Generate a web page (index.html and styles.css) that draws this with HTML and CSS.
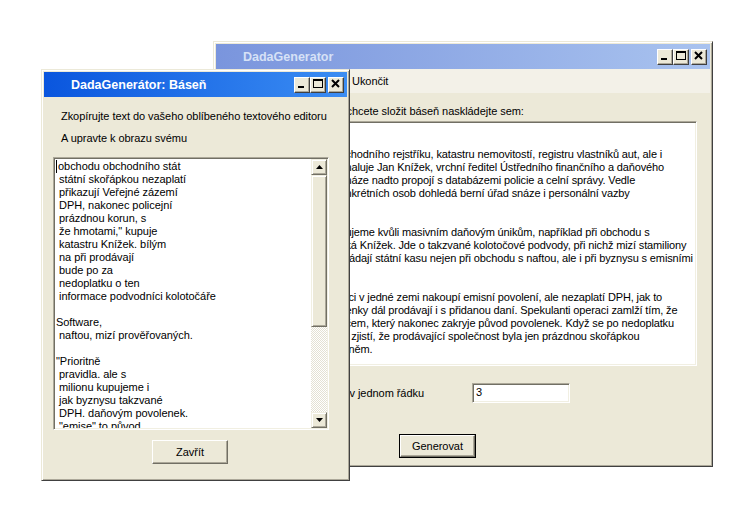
FILE: index.html
```html
<!DOCTYPE html>
<html lang="cs">
<head>
    <meta charset="UTF-8">
    <meta name="viewport" content="width=device-width, initial-scale=1.0">
    <title>DadaGenerator</title>

    <link rel="stylesheet" href="styles.css">
</head>
<body>
<div class="desktop">

    <!-- hlavni okno (neaktivni, v pozadi) -->
    <div class="window main-window">
        <div class="titlebar inactive">
            <span class="title">DadaGenerator</span>
            <div class="title-buttons">
                <span class="tbtn"><svg width="16" height="16" viewBox="0 0 16 16"><rect x="4" y="10" width="6" height="2" fill="#000"/></svg></span>
                <span class="tbtn"><svg width="16" height="16" viewBox="0 0 16 16"><rect x="3.5" y="3.5" width="9" height="8" fill="none" stroke="#000"/><rect x="3" y="3" width="10" height="2" fill="#000"/></svg></span>
                <span class="tbtn close"><svg width="16" height="16" viewBox="0 0 16 16"><path d="M4 4 L11 11 M11 4 L4 11" stroke="#000" stroke-width="2"/></svg></span>
            </div>
        </div>
        <div class="menubar">
            <span class="menu-item">Ukončit</span>
        </div>
        <div class="main-body">
            <div class="main-label">chcete složit báseň naskládejte sem:</div>
            <div class="textbox source-box">
                <div class="source-text">

chodního rejstříku, katastru nemovitostí, registru vlastníků aut, ale i
haluje Jan Knížek, vrchní ředitel Ústředního finančního a daňového
náze nadto propojí s databázemi policie a celní správy. Vedle
nkrétních osob dohledá berní úřad snáze i personální vazby


ujeme kvůli masivním daňovým únikům, například při obchodu s
ká Knížek. Jde o takzvané kolotočové podvody, při nichž mizí stamiliony
rádají státní kasu nejen při obchodu s naftou, ale i při byznysu s emisními


íci v jedné zemi nakoupí emisní povolení, ale nezaplatí DPH, jak to
enky dál prodávají i s přidanou daní. Spekulanti operaci zamlží tím, že
čem, který nakonec zakryje původ povolenek. Když se po nedoplatku
í zjistí, že prodávající společnost byla jen prázdnou skořápkou
 něm.</div>
            </div>
            <div class="field-row">
                <span class="field-label"> v jednom řádku</span>
                <div class="field-input">3</div>
            </div>
            <div class="generate-row">
                <span class="btn btn-default">Generovat</span>
            </div>
        </div>
    </div>

    <!-- okno s basni (aktivni) -->
    <div class="window poem-window">
        <div class="titlebar active">
            <span class="title">DadaGenerátor: Báseň</span>
            <div class="title-buttons">
                <span class="tbtn"><svg width="16" height="16" viewBox="0 0 16 16"><rect x="4" y="10" width="6" height="2" fill="#000"/></svg></span>
                <span class="tbtn"><svg width="16" height="16" viewBox="0 0 16 16"><rect x="3.5" y="3.5" width="9" height="8" fill="none" stroke="#000"/><rect x="3" y="3" width="10" height="2" fill="#000"/></svg></span>
                <span class="tbtn close"><svg width="16" height="16" viewBox="0 0 16 16"><path d="M4 4 L11 11 M11 4 L4 11" stroke="#000" stroke-width="2"/></svg></span>
            </div>
        </div>
        <div class="poem-body">
            <div class="poem-label">Zkopírujte text do vašeho oblíbeného textového editoru</div>
            <div class="poem-label second">A upravte k obrazu svému</div>
            <div class="textbox poem-box">
                <div class="poem-text"><span class="caret"></span>obchodu obchodního stát
 státní skořápkou nezaplatí
 přikazují Veřejné zázemí
 DPH, nakonec policejní
 prázdnou korun, s
 že hmotami," kupuje
 katastru Knížek. bílým
 na při prodávají
 bude po za
 nedoplatku o ten
 informace podvodníci kolotočáře

Software,
 naftou, mizí prověřovaných.

"Prioritně
 pravidla. ale s
 milionu kupujeme i
 jak byznysu takzvané
 DPH. daňovým povolenek.
 "emise" to původ
 nakonec</div>
                <div class="scrollbar">
                    <span class="sb-btn"><svg width="7" height="4" viewBox="0 0 7 4"><path d="M3.5 0 L7 4 L0 4 Z" fill="#000"/></svg></span>
                    <span class="sb-thumb"></span>
                    <span class="sb-track"></span>
                    <span class="sb-btn"><svg width="7" height="4" viewBox="0 0 7 4"><path d="M0 0 L7 0 L3.5 4 Z" fill="#000"/></svg></span>
                </div>
            </div>
            <div class="poem-actions">
                <span class="btn close-btn">Zavřít</span>
            </div>
        </div>
    </div>

</div>
</body>
</html>
```

FILE: styles.css
```css
body{
    margin: 0;
    background: #fff;
    font-family: "Liberation Sans", Arial, sans-serif;
    font-size: 11px;
    letter-spacing: -0.05px;
    color: #000;
}

.desktop{
    position: relative;
    width: 753px;
    height: 520px;
    overflow: hidden;
}

/* okna */
.window{
    position: absolute;
    box-sizing: border-box;
    display: flex;
    flex-direction: column;
    padding: 2px;
    background: #ECE9D8;
    border: 1px solid;
    border-color: #ECE9D8 #404040 #404040 #ECE9D8;
    box-shadow: inset 1px 1px #fff, inset -1px -1px #ACA899;
}

.main-window{
    left: 213px;
    top: 41px;
    width: 500px;
    height: 426px;
}

.poem-window{
    left: 41px;
    top: 69px;
    width: 309px;
    height: 412px;
}

.titlebar{
    height: 25px;
    display: flex;
    align-items: center;
    padding: 0 3px 0 27px;
    flex-shrink: 0;
}

.titlebar.active{
    background: linear-gradient(to right, #0A56DE, #3B8DF3);
    color: #fff;
}

.titlebar.inactive{
    background: linear-gradient(to right, #7A95DD, #A9C3EF);
    color: #D6E1F6;
}

.title{
    flex: 1;
    font-weight: bold;
    font-size: 12.5px;
    letter-spacing: 0;
    white-space: nowrap;
}

.title-buttons{
    display: flex;
}

.tbtn{
    box-sizing: border-box;
    width: 16px;
    height: 16px;
    background: #ECE9D8;
    border: 1px solid;
    border-color: #fff #404040 #404040 #fff;
    box-shadow: inset -1px -1px #ACA899;
    display: flex;
    align-items: center;
    justify-content: center;
    overflow: hidden;
}

.tbtn svg{
    flex-shrink: 0;
    margin: -1px 0 0 -1px;
}

.tbtn.close{
    margin-left: 2px;
}

/* spolecne prvky */
.textbox{
    box-sizing: border-box;
    background: #fff;
    border: 1px solid;
    border-color: #ACA899 #fff #fff #ACA899;
    box-shadow: inset 1px 1px #716F64, inset -1px -1px #F1EFE2;
    padding: 1px;
}

.btn{
    box-sizing: border-box;
    display: inline-flex;
    align-items: center;
    justify-content: center;
    background: #ECE9D8;
    border: 1px solid;
    border-color: #fff #716F64 #716F64 #fff;
    box-shadow: inset -1px -1px #ACA899;
}

.btn-default{
    outline: 1px solid #000;
}

/* hlavni okno */
.menubar{
    height: 24px;
    line-height: 24px;
    padding-left: 136px;
    background: #F3F1E8;
    flex-shrink: 0;
}

.main-body{
    padding: 0 13px 0 10px;
}

.main-label{
    margin-top: 12px;
    line-height: 13px;
    padding-left: 120.5px;
    white-space: nowrap;
}

.source-box{
    margin-top: 3px;
    height: 245px;
    overflow: hidden;
}

.source-text{
    white-space: pre;
    line-height: 13px;
    letter-spacing: -0.13px;
    padding-left: 117.5px;
    margin-top: -1px;
}

.field-row{
    display: flex;
    align-items: center;
    margin-top: 17px;
}

.field-label{
    box-sizing: border-box;
    width: 246px;
    padding-left: 120.5px;
    white-space: pre;
}

.field-input{
    box-sizing: border-box;
    width: 98px;
    height: 20px;
    line-height: 16px;
    padding-left: 3px;
    background: #fff;
    border: 1px solid;
    border-color: #ACA899 #fff #fff #ACA899;
    box-shadow: inset 1px 1px #716F64, inset -1px -1px #F1EFE2;
}

.generate-row{
    margin-top: 32px;
    padding-left: 174px;
}

.generate-row .btn{
    width: 75px;
    height: 22px;
}

/* okno s basni */
.poem-body{
    padding: 13px 18px 0 9px;
}

.poem-label{
    line-height: 13px;
    padding-left: 8px;
    white-space: nowrap;
}

.poem-label.second{
    margin-top: 9px;
}

.poem-box{
    margin-top: 12px;
    height: 273px;
    display: flex;
}

.poem-text{
    flex: 1;
    white-space: pre;
    overflow: hidden;
    line-height: 13px;
    padding: 1px 0 0 1px;
}

.caret{
    display: inline-block;
    width: 1px;
    height: 13px;
    margin-right: 1px;
    background: #000;
    vertical-align: top;
}

.scrollbar{
    width: 16px;
    display: flex;
    flex-direction: column;
}

.sb-btn,
.sb-thumb{
    box-sizing: border-box;
    background: #ECE9D8;
    border: 1px solid;
    border-color: #F1EFE2 #716F64 #716F64 #F1EFE2;
    box-shadow: inset 1px 1px #fff, inset -1px -1px #ACA899;
}

.sb-btn{
    height: 16px;
    display: flex;
    align-items: center;
    justify-content: center;
}

.sb-thumb{
    height: 152px;
}

.sb-track{
    flex: 1;
    background: repeating-conic-gradient(#fff 0 25%, #E4E1D3 0 50%) 0 0/2px 2px;
}

.poem-actions{
    margin-top: 10px;
    padding-left: 99px;
}

.close-btn{
    width: 76px;
    height: 24px;
}
```
